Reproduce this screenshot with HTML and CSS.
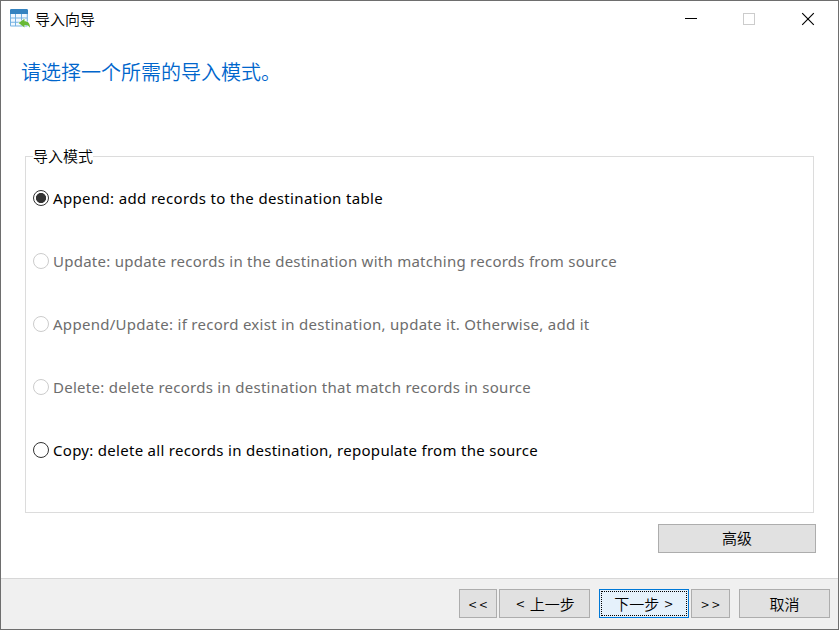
FILE: index.html
```
<!DOCTYPE html>
<html lang="zh-CN">
<head>
<meta charset="utf-8">
<title>导入向导</title>
<link rel="stylesheet" href="styles.css">
</head>
<body>
<div class="window">
  <header class="titlebar">
    <svg class="app-icon" width="20" height="19" viewBox="0 0 20 19">
      <rect x="0" y="0.3" width="17.8" height="17.2" rx="1" fill="#72b1e2"/>
      <path d="M1 0h16l1 1v4H0V1z" fill="#3583c0"/>
      <path d="M1 5h4v3.6H1zM6 5h5v3.6H6zM12 5h4.8v3.6H12zM1 9.5h4v3.2H1zM6 9.5h5v3.2H6zM12 9.5h4.8v3.2H12zM1 13.7h4v2.8H1zM6 13.7h5v2.8H6z" fill="#f1f8fe"/>
      <path d="M8.6 13.9l5.9-4.2v2.6c3.5 0 5.5 2 5.5 6.5-1.3-2.1-2.8-2.8-5.5-2.7v2.3z" fill="#68b936" stroke="#fff" stroke-width=".8" paint-order="stroke"/>
    </svg>
    <span class="title">导入向导</span>
    <svg class="controls" width="130" height="14" viewBox="0 0 130 14">
      <path d="M0 6.5h12" stroke="#000"/>
      <rect x="58.5" y="1.5" width="11" height="11" fill="none" stroke="#ccc"/>
      <path d="M117.2 1.2l11.6 11.6M128.8 1.2l-11.6 11.6" stroke="#000" stroke-width="1.15"/>
    </svg>
  </header>
  <h1 class="heading">请选择一个所需的导入模式。</h1>
  <section class="group">
    <span class="legend">导入模式</span>
    <div class="option"><i class="radio checked"></i><span class="label append">Append: add records to the destination table</span></div>
    <div class="option disabled"><i class="radio"></i><span class="label update">Update: update records in the destination with matching records from source</span></div>
    <div class="option disabled"><i class="radio"></i><span class="label upsert">Append/Update: if record exist in destination, update it. Otherwise, add it</span></div>
    <div class="option disabled"><i class="radio"></i><span class="label delete">Delete: delete records in destination that match records in source</span></div>
    <div class="option"><i class="radio"></i><span class="label copy">Copy: delete all records in destination, repopulate from the source</span></div>
  </section>
  <button class="btn advanced">高级</button>
  <footer class="footer">
    <button class="btn first"><span class="arrows">&lt;&lt;</span></button>
    <button class="btn prev">&lt; 上一步</button>
    <button class="btn next"><span class="focus">下一步 &gt;</span></button>
    <button class="btn last"><span class="arrows">&gt;&gt;</span></button>
    <button class="btn cancel">取消</button>
  </footer>
</div>
</body>
</html>
```
FILE: styles.css
```
* { box-sizing: border-box; }
body {
  margin: 0;
  font: 15px/20px "Noto Sans", "Noto Sans CJK SC", sans-serif;
  color: #000;
}
.window {
  width: 839px;
  height: 630px;
  border: 1px solid #6e6e6e;
  background: #fff;
  display: flex;
  flex-direction: column;
  overflow: hidden;
}
.titlebar {
  height: 36px;
  display: flex;
  align-items: center;
  padding: 0 23px 0 9px;
}
.app-icon { margin: 0 5px 1px 0; }
.title, .legend, .heading, .btn { font-family: "Noto Sans CJK SC", sans-serif; font-weight: 350; }
.title { font-size: 15px; margin-bottom: 1px; }
.controls { margin-left: auto; }
.heading {
  margin: 20px 0 0 20px;
  height: 30px;
  font-size: 20px;
  line-height: 30px;
  color: #0066cc;
  white-space: nowrap;
}
.group {
  margin: 69px 24px 0;
  width: 789px;
  height: 357px;
  border: 1px solid #dcdcdc;
  padding: 0 7px;
  flex: none;
}
.legend {
  display: block;
  width: 60px;
  height: 20px;
  margin-top: -11px;
  margin-bottom: 22px;
  background: #fff;
  white-space: nowrap;
}
.option {
  height: 20px;
  margin-bottom: 43px;
  display: flex;
  align-items: center;
  white-space: nowrap;
}
.append { letter-spacing: 0.35px; }
.update { letter-spacing: 0.257px; }
.upsert { letter-spacing: 0.285px; }
.delete { letter-spacing: 0.27px; }
.copy { letter-spacing: 0.29px; }
.radio {
  width: 16px;
  height: 16px;
  margin-right: 4px;
  border: 1px solid #333;
  border-radius: 50%;
  flex: none;
}
.checked { background: radial-gradient(circle, #333 4.7px, transparent 5.4px); }
.disabled { color: #6d6d6d; }
.disabled .radio { border-color: #ccc; }
.btn {
  height: 29px;
  padding: 0;
  border: 1px solid #adadad;
  border-radius: 0;
  background: #e1e1e1;
  color: #000;
  font-size: 15px;
  line-height: 27px;
  white-space: nowrap;
}
.advanced { width: 158px; margin: 11px 0 0 657px; padding-bottom: 1px; line-height: 26px; flex: none; }
.footer {
  margin-top: auto;
  height: 51px;
  border-top: 1px solid #d7d7d7;
  background: #f0f0f0;
  padding: 10px 8px 0 458px;
  display: flex;
}
.first { width: 38px; margin-right: 2px; }
.prev { width: 91px; margin-right: 9px; word-spacing: 2px; padding-left: 2px; }
.next { width: 90px; margin-right: 2px; border-color: #0078d7; background: #e5f1fb; padding: 1px; word-spacing: 2px; }
.focus { display: block; height: 25px; line-height: 23px; border: 1px dotted #000; padding-right: 1px; }
.last { width: 39px; margin-right: 9px; }
.cancel { width: 91px; }
.arrows { font-size: 14px; letter-spacing: 3.2px; margin-right: -3.2px; }
```
